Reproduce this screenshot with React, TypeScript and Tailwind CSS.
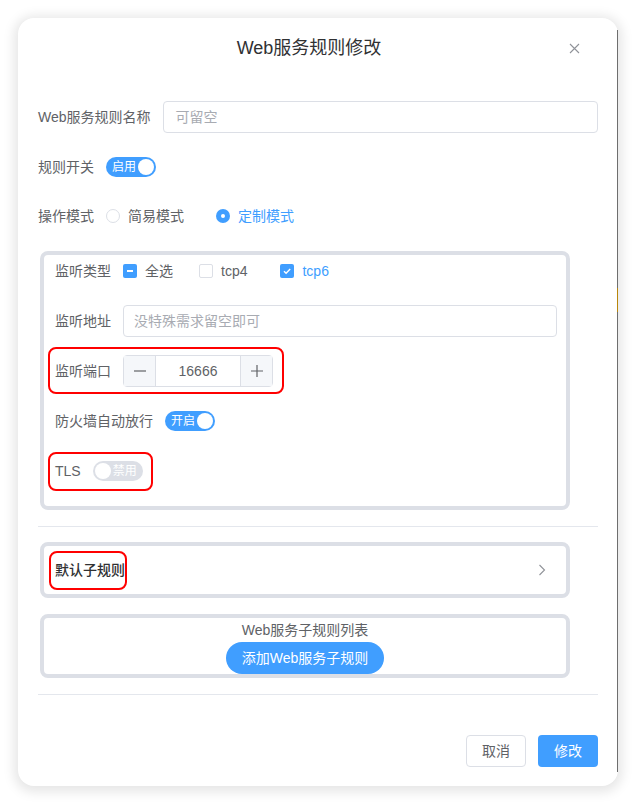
import { ReactNode } from "react";

const font = { fontFamily: '"Liberation Sans", "Noto Sans CJK SC", sans-serif' };

function Switch({ on, text }: { on: boolean; text: string }) {
  return (
    <div
      className={
        "relative flex h-5 w-[50px] items-center rounded-full " +
        (on ? "bg-[#409eff] justify-start pl-[6px]" : "bg-[#dcdfe6] justify-end pr-[6px]")
      }
    >
      <span className="text-[12px] leading-none text-white">{text}</span>
      <span
        className={
          "absolute top-[2px] h-4 w-4 rounded-full bg-white " + (on ? "right-[2px]" : "left-[2px]")
        }
      />
    </div>
  );
}

function Radio({ checked, label }: { checked: boolean; label: string }) {
  return (
    <div className="flex items-center">
      {checked ? (
        <span className="flex h-[14px] w-[14px] items-center justify-center rounded-full bg-[#409eff]">
          <span className="h-1 w-1 rounded-full bg-white" />
        </span>
      ) : (
        <span className="h-[14px] w-[14px] rounded-full border border-[#dcdfe6] bg-white" />
      )}
      <span className={"ml-2 text-[14px] " + (checked ? "text-[#409eff]" : "text-[#606266]")}>
        {label}
      </span>
    </div>
  );
}

function Check({ state, label, className }: { state: "on" | "off" | "half"; label: string; className?: string }) {
  return (
    <div className={"flex items-center " + (className ?? "")}>
      {state === "off" ? (
        <span className="h-[14px] w-[14px] rounded-[2px] border border-[#dcdfe6] bg-white" />
      ) : (
        <span className="flex h-[14px] w-[14px] items-center justify-center rounded-[2px] bg-[#409eff]">
          {state === "half" ? (
            <span className="h-[2px] w-[6px] bg-white" />
          ) : (
            <svg width="10" height="10" viewBox="0 0 10 10" fill="none">
              <path d="M2 5.2l2.1 2.1L8.2 3" stroke="white" strokeWidth="1.4" />
            </svg>
          )}
        </span>
      )}
      <span className={"ml-2 text-[14px] " + (state === "on" ? "text-[#409eff]" : "text-[#606266]")}>
        {label}
      </span>
    </div>
  );
}

function Row({ label, children, className }: { label: string; children: ReactNode; className?: string }) {
  return (
    <div className={"relative flex h-8 items-center " + (className ?? "")}>
      <span className="pr-3 text-[14px] text-[#606266] whitespace-nowrap">{label}</span>
      {children}
    </div>
  );
}

export default function App() {
  return (
    <div className="min-h-[804px] w-[637px] bg-white p-[18px]" style={font}>
      <div className="relative flex h-[768px] w-[600px] flex-col rounded-2xl bg-white shadow-[0_2px_12px_4px_rgba(0,0,0,0.1)]">
        {/* edge of the page behind */}
        <div className="absolute right-0 top-[12px] bottom-[14px] w-px bg-[#6e6e6e]">
          <div className="mt-[258px] h-[24px] w-px bg-[#b8860b]" />
        </div>

        {/* header */}
        <div className="relative pt-[18px] pr-[18px]">
          <div className="text-center text-[18px] leading-6 text-[#303133]">Web服务规则修改</div>
          <svg
            className="absolute right-[38px] top-[25px]"
            width="11"
            height="11"
            viewBox="0 0 11 11"
            fill="none"
          >
            <path d="M1 1l9 9M10 1l-9 9" stroke="#909399" strokeWidth="1.1" />
          </svg>
        </div>

        {/* body */}
        <div className="px-5 pt-[41px]">
          <Row label="Web服务规则名称" className="mb-[18px]">
            <div className="flex h-8 flex-1 items-center rounded border border-[#dcdfe6] pl-3 text-[14px] text-[#a8abb2]">
              可留空
            </div>
          </Row>
          <Row label="规则开关" className="mb-[17px]">
            <Switch on text="启用" />
          </Row>
          <Row label="操作模式" className="mb-[19px]">
            <Radio checked={false} label="简易模式" />
            <div className="w-8" />
            <Radio checked label="定制模式" />
          </Row>

          {/* listener box */}
          <div className="ml-[2px] w-[530px] rounded-lg border-4 border-[#dcdfe6] pb-[19px] pl-[11px] pr-[9px]">
            <Row label="监听类型" className="mb-[18px]">
              <Check state="half" label="全选" className="mr-[26px]" />
              <Check state="off" label="tcp4" className="mr-[33px]" />
              <Check state="on" label="tcp6" />
            </Row>
            <Row label="监听地址" className="mb-[18px]">
              <div className="flex h-8 flex-1 items-center rounded border border-[#dcdfe6] pl-[10px] text-[14px] text-[#a8abb2]">
                没特殊需求留空即可
              </div>
            </Row>
            <Row label="监听端口" className="mb-[18px]">
              <div className="flex h-8 w-[150px] rounded border border-[#dcdfe6] text-[#606266]">
                <div className="flex w-8 items-center justify-center border-r border-[#dcdfe6] bg-[#f5f7fa]">
                  <svg width="14" height="14" viewBox="0 0 14 14">
                    <path d="M1 7h12" stroke="#606266" strokeWidth="1.2" />
                  </svg>
                </div>
                <div className="flex flex-1 items-center justify-center text-[14px]">16666</div>
                <div className="flex w-8 items-center justify-center border-l border-[#dcdfe6] bg-[#f5f7fa]">
                  <svg width="14" height="14" viewBox="0 0 14 14">
                    <path d="M1 7h12M7 1v12" stroke="#606266" strokeWidth="1.2" />
                  </svg>
                </div>
              </div>
              <div className="pointer-events-none absolute -left-[7px] -top-[8px] h-[47px] w-[236px] rounded-lg border-2 border-[#f00]" />
            </Row>
            <Row label="防火墙自动放行" className="mb-[18px]">
              <Switch on text="开启" />
            </Row>
            <Row label="TLS">
              <Switch on={false} text="禁用" />
              <div className="pointer-events-none absolute -left-[7px] -top-[3px] h-[39px] w-[105px] rounded-lg border-2 border-[#f00]" />
            </Row>
          </div>

          <div className="mt-4 mb-[15px] h-px bg-[#e4e7ed]" />

          {/* default sub rule */}
          <div className="ml-[2px] flex h-14 w-[530px] items-center justify-between rounded-lg border-4 border-[#dcdfe6] pl-[5px] pr-[20px]">
            <div className="relative flex h-[39px] items-center rounded-lg border-2 border-[#f00] pl-[4px]">
              <span className="text-[14px] font-medium text-[#303133]">默认子规则</span>
            </div>
            <svg width="8" height="12" viewBox="0 0 8 12" fill="none">
              <path d="M1.5 1l5 5-5 5" stroke="#909399" strokeWidth="1.1" />
            </svg>
          </div>

          {/* sub rule list */}
          <div className="ml-[2px] mt-4 flex h-16 w-[530px] flex-col items-center rounded-lg border-4 border-[#dcdfe6]">
            <div className="h-6 text-[14px] leading-6 text-[#606266]">Web服务子规则列表</div>
            <div className="flex h-8 w-[158px] items-center justify-center rounded-full bg-[#409eff] text-[14px] text-white">
              添加Web服务子规则
            </div>
          </div>

          <div className="mt-4 h-px bg-[#e4e7ed]" />
        </div>

        {/* footer */}
        <div className="flex justify-end gap-3 px-5 pt-[40px]">
          <div className="flex h-8 w-[60px] items-center justify-center rounded border border-[#dcdfe6] bg-white text-[14px] text-[#606266]">
            取消
          </div>
          <div className="flex h-8 w-[60px] items-center justify-center rounded bg-[#409eff] text-[14px] text-white">
            修改
          </div>
        </div>
      </div>
    </div>
  );
}
